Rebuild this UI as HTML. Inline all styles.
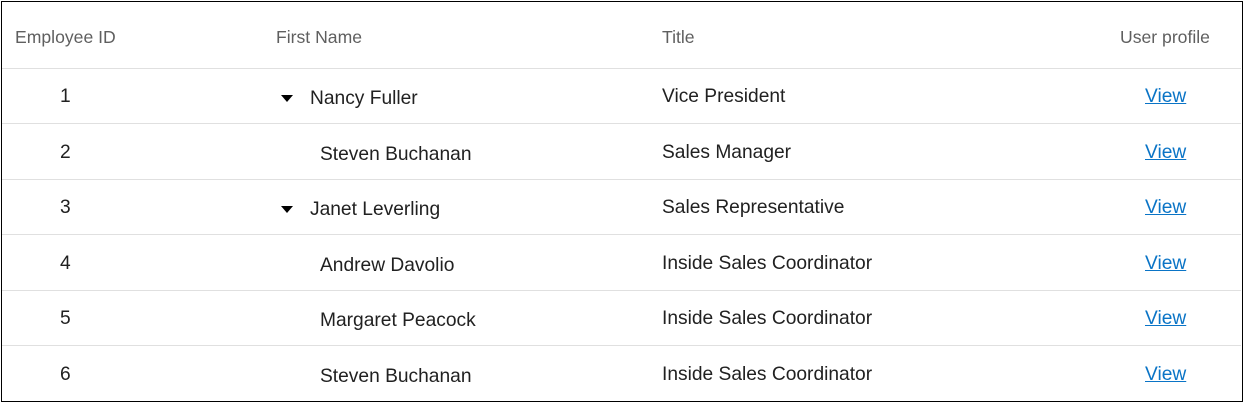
<!DOCTYPE html>
<html><head><style>
body{margin:0;width:1245px;height:402px;background:#fff;font-family:"Liberation Sans",Roboto,sans-serif;overflow:hidden;position:relative}
.frame{position:absolute;left:1px;top:1px;width:1240px;height:399px;border:1px solid #000;box-sizing:content-box}
.h{position:absolute;top:27px;font-size:17.6px;color:#5f5f5f}
.line{position:absolute;left:2px;width:1239px;height:1px;background:#e0e0e0}
.c{position:absolute;font-size:19.2px;color:#212121;white-space:nowrap}
.v{position:absolute;font-size:19.2px;color:#0a74c6;text-decoration:underline}
.tri{position:absolute;width:0;height:0;border-left:6px solid transparent;border-right:6px solid transparent;border-top:7px solid #000}
</style></head><body>
<div class="frame"></div>
<div class="h" style="left:15px">Employee ID</div>
<div class="h" style="left:276px">First Name</div>
<div class="h" style="left:662px">Title</div>
<div class="h" style="left:1120px">User profile</div>
<div class="line" style="top:68px"></div>
<div class="line" style="top:123px"></div>
<div class="line" style="top:179px"></div>
<div class="line" style="top:234px"></div>
<div class="line" style="top:290px"></div>
<div class="line" style="top:345px"></div>

<div class="c" style="left:60px;top:86px">1</div>
<div class="tri" style="left:281px;top:95px"></div>
<div class="c" style="left:310px;top:88px">Nancy Fuller</div>
<div class="c" style="left:662px;top:86px">Vice President</div>
<div class="v" style="left:1145px;top:86px">View</div>

<div class="c" style="left:60px;top:142px">2</div>
<div class="c" style="left:320px;top:144px">Steven Buchanan</div>
<div class="c" style="left:662px;top:142px">Sales Manager</div>
<div class="v" style="left:1145px;top:142px">View</div>

<div class="c" style="left:60px;top:197px">3</div>
<div class="tri" style="left:281px;top:206px"></div>
<div class="c" style="left:310px;top:199px">Janet Leverling</div>
<div class="c" style="left:662px;top:197px">Sales Representative</div>
<div class="v" style="left:1145px;top:197px">View</div>

<div class="c" style="left:60px;top:253px">4</div>
<div class="c" style="left:320px;top:255px">Andrew Davolio</div>
<div class="c" style="left:662px;top:253px">Inside Sales Coordinator</div>
<div class="v" style="left:1145px;top:253px">View</div>

<div class="c" style="left:60px;top:308px">5</div>
<div class="c" style="left:320px;top:310px">Margaret Peacock</div>
<div class="c" style="left:662px;top:308px">Inside Sales Coordinator</div>
<div class="v" style="left:1145px;top:308px">View</div>

<div class="c" style="left:60px;top:364px">6</div>
<div class="c" style="left:320px;top:366px">Steven Buchanan</div>
<div class="c" style="left:662px;top:364px">Inside Sales Coordinator</div>
<div class="v" style="left:1145px;top:364px">View</div>
</body></html>
